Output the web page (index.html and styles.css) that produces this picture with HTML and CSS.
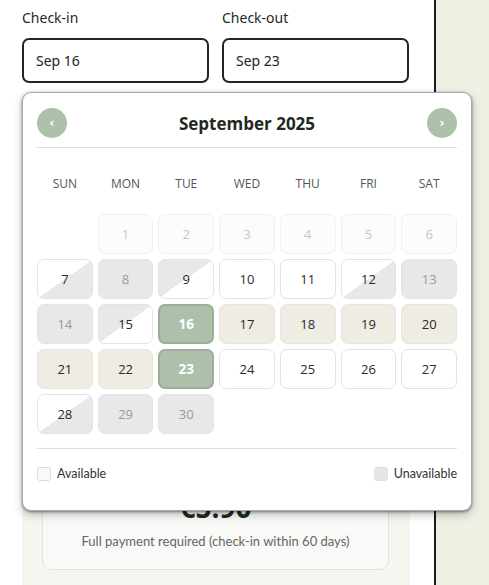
FILE: index.html
```html
<!DOCTYPE html>
<html lang="en">
<head>
<meta charset="utf-8">
<title>Booking dates</title>
<link rel="stylesheet" href="styles.css">
</head>
<body>
<main class="column">
  <div class="dates">
    <div class="field">
      <span class="field-label">Check-in</span>
      <div class="field-input">Sep 16</div>
    </div>
    <div class="field">
      <span class="field-label">Check-out</span>
      <div class="field-input">Sep 23</div>
    </div>
  </div>

  <section class="summary">
    <div class="price-card">
      <div class="price">€5.90</div>
      <p class="price-note">Full payment required (check-in within 60 days)</p>
    </div>
  </section>

  <div class="calendar">
    <div class="cal-head">
      <button class="nav" type="button">‹</button>
      <h2 class="cal-title">September 2025</h2>
      <button class="nav" type="button">›</button>
    </div>
    <div class="weekdays">
      <span>Sun</span><span>Mon</span><span>Tue</span><span>Wed</span><span>Thu</span><span>Fri</span><span>Sat</span>
    </div>
    <div class="days">
      <span class="day day--blank"></span>
      <span class="day day--past">1</span>
      <span class="day day--past">2</span>
      <span class="day day--past">3</span>
      <span class="day day--past">4</span>
      <span class="day day--past">5</span>
      <span class="day day--past">6</span>

      <span class="day day--in-only">7</span>
      <span class="day day--off">8</span>
      <span class="day day--out-only">9</span>
      <span class="day">10</span>
      <span class="day">11</span>
      <span class="day day--in-only">12</span>
      <span class="day day--off">13</span>

      <span class="day day--off">14</span>
      <span class="day day--out-only">15</span>
      <span class="day day--picked">16</span>
      <span class="day day--range">17</span>
      <span class="day day--range">18</span>
      <span class="day day--range">19</span>
      <span class="day day--range">20</span>

      <span class="day day--range">21</span>
      <span class="day day--range">22</span>
      <span class="day day--picked">23</span>
      <span class="day">24</span>
      <span class="day">25</span>
      <span class="day">26</span>
      <span class="day">27</span>

      <span class="day day--in-only">28</span>
      <span class="day day--off">29</span>
      <span class="day day--off">30</span>
    </div>
    <div class="legend">
      <span class="legend-item"><i class="swatch"></i>Available</span>
      <span class="legend-item"><i class="swatch swatch--off"></i>Unavailable</span>
    </div>
  </div>
</main>
</body>
</html>
```
FILE: styles.css
```css
* { box-sizing: border-box; }

html, body {
  margin: 0;
  padding: 0;
}

body {
  background: #f0efe4;
  font-family: "Noto Sans", "Open Sans", sans-serif;
  color: #1f2a1f;
}

/* left booking column with its dark rule */
.column {
  position: relative;
  width: 436px;
  min-height: 100vh;
  background: #fff;
  border-right: 2px solid #1b1d1a;
  padding: 9px 0 0 22px;
}

/* date inputs */
.dates {
  display: grid;
  grid-template-columns: 187px 187px;
  gap: 13px;
}

.field {
  display: flex;
  flex-direction: column;
  gap: 11px;
}

.field-label {
  font-size: 14px;
  line-height: 18px;
  color: #1f2a1f;
}

.field-input {
  height: 45px;
  border: 2px solid #1f2a1f;
  border-radius: 7px;
  padding: 0 12px;
  display: flex;
  align-items: center;
  font-size: 14px;
  color: #222;
}

/* price summary behind the popup */
.summary {
  width: 388px;
  margin-top: 17px;
  background: #f6f5ef;
  padding: 20px 21px 30px 20px;
}

.price-card {
  height: 450px;
  background: #f9f9f8;
  border: 1px solid #e2e2e0;
  border-radius: 9px;
  display: flex;
  flex-direction: column;
  justify-content: flex-end;
  align-items: center;
  padding: 0 12px 19px;
}

.price {
  font-family: "Open Sans", sans-serif;
  font-size: 28px;
  line-height: 34px;
  font-weight: 700;
  color: #1f2a1f;
}

.price-note {
  margin: 8px 0 0;
  font-family: Lato, "Noto Sans", sans-serif;
  font-size: 13px;
  line-height: 18px;
  color: #666;
}

/* calendar popup */
.calendar {
  position: absolute;
  top: 92px;
  left: 22px;
  width: 450px;
  background: #fff;
  border: 1px solid #a9a9a9;
  border-radius: 9px;
  box-shadow: 0 1px 3px rgba(0, 0, 0, 0.45), 0 4px 10px rgba(0, 0, 0, 0.22);
  padding: 15px 14px 29px;
  font-family: "Open Sans", sans-serif;
  z-index: 5;
}

.cal-head {
  display: flex;
  align-items: center;
  justify-content: space-between;
  padding-bottom: 9px;
  border-bottom: 1px solid #dedede;
}

.cal-title {
  margin: 0;
  font-size: 17px;
  font-weight: 700;
  color: #1f2a1f;
}

.nav {
  width: 30px;
  height: 30px;
  border-radius: 50%;
  border: 0;
  background: #adc0aa;
  color: #fff;
  font-family: "DejaVu Sans", sans-serif;
  font-size: 13px;
  font-weight: 700;
  line-height: 30px;
  padding: 0;
  text-align: center;
}

.weekdays {
  display: grid;
  grid-template-columns: repeat(7, 1fr);
  gap: 5px;
  margin: 27px 0 21px;
  font-size: 12px;
  line-height: 18px;
  text-transform: uppercase;
  text-align: center;
  color: #555;
}

.days {
  display: grid;
  grid-template-columns: repeat(7, 1fr);
  grid-auto-rows: 40px;
  gap: 5px;
}

.day {
  display: flex;
  align-items: center;
  justify-content: center;
  border: 1px solid #e2e2e2;
  border-radius: 7px;
  background: #fff;
  font-size: 13px;
  color: #2a2a2a;
}

.day--blank {
  border: 0;
  background: none;
}

.day--past {
  background: #fcfcfc;
  border-color: #f0f0f0;
  color: #c6c6c6;
}

.day--off {
  background: #e8e8e8;
  border-color: #e4e4e4;
  color: #9a9a9a;
}

/* arrival allowed, departure blocked */
.day--in-only {
  background: linear-gradient(to top left, #e8e8e8 50%, #fff 50%);
}

/* departure allowed, arrival blocked */
.day--out-only {
  background: linear-gradient(to bottom right, #e8e8e8 50%, #fff 50%);
}

.day--range {
  background: #efece4;
  border-color: #e8e5dc;
}

.day--picked {
  background: #adc0aa;
  border: 2px solid #9aaf97;
  color: #fff;
  font-weight: 700;
  font-size: 13.5px;
}

.legend {
  margin-top: 14px;
  border-top: 1px solid #dedede;
  padding-top: 17px;
  margin-bottom: -1px;
  display: flex;
  justify-content: space-between;
  font-family: Lato, "Noto Sans", sans-serif;
  font-size: 12.5px;
  line-height: 16px;
  color: #333;
}

.legend-item {
  display: flex;
  align-items: center;
  gap: 6px;
}

.swatch {
  width: 14px;
  height: 14px;
  border-radius: 3px;
  border: 1px solid #dcdcdc;
  background: #fafafa;
}

.swatch--off {
  background: #e6e6e6;
  border-color: #e0e0e0;
}
```
